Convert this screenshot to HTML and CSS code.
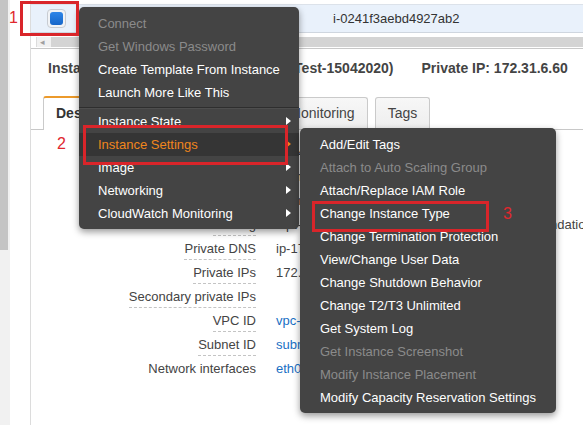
FILE: index.html
```html
<!DOCTYPE html>
<html lang="en">
<head>
<meta charset="utf-8">
<title>EC2 Instance Actions</title>
<link rel="stylesheet" href="styles.css">
</head>
<body>
<div class="app">
  <div class="scrolltrack"><div class="thumb"></div></div>
  <div class="gutter"></div>
  <main class="panel">
    <div class="grid-row">
      <div class="cell-check"><span class="checkbox"><span class="checkbox-fill"></span></span></div>
      <div class="cell-name">Test-15042020</div>
      <div class="cell-id">i-0241f3aebd4927ab2</div>
    </div>
    <div class="hscroll"><span class="hscroll-btn">&#9666;</span><span class="hscroll-track"></span></div>
    <div class="divider"></div>
    <section class="details">
      <h2 class="details-title">
        <span class="t-label">Instance:</span>
        <span class="t-id">i-0241f3aebd4927ab2 (Test-15042020)</span>
        <span class="t-ip">Private IP: 172.31.6.60</span>
      </h2>
      <div class="tabs">
        <div class="tab active">Description</div>
        <div class="tab">Status Checks</div>
        <div class="tab">Monitoring</div>
        <div class="tab">Tags</div>
      </div>
      <div class="props">
        <div class="prop"><div class="k"><span>Instance ID</span></div><div class="v">i-0241f3aebd4927ab2</div></div>
        <div class="prop"><div class="k"><span>Instance state</span></div><div class="v">running</div></div>
        <div class="prop"><div class="k"><span>Instance type</span></div><div class="v">t2.micro</div></div>
        <div class="prop"><div class="k"><span>Finding</span></div><div class="v">Opt-in to AWS Compute Optimizer for recommendations. | Learn more</div></div>
        <div class="prop"><div class="k"><span>Private DNS</span></div><div class="v">ip-172-31-6-60.ap-south-1.compute.internal</div></div>
        <div class="prop"><div class="k"><span>Private IPs</span></div><div class="v">172.31.6.60</div></div>
        <div class="prop"><div class="k"><span>Secondary private IPs</span></div><div class="v"></div></div>
        <div class="prop"><div class="k"><span>VPC ID</span></div><div class="v link">vpc-5a8c3e31</div></div>
        <div class="prop"><div class="k"><span>Subnet ID</span></div><div class="v link">subnet-0b2e6c47</div></div>
        <div class="prop"><div class="k"><span class="plain">Network interfaces</span></div><div class="v link">eth0</div></div>
      </div>
    </section>
  </main>
</div>

<div class="menu menu-main">
  <div class="item disabled">Connect</div>
  <div class="item disabled">Get Windows Password</div>
  <div class="item">Create Template From Instance</div>
  <div class="item">Launch More Like This</div>
  <div class="sep"></div>
  <div class="item sub">Instance State</div>
  <div class="item sub hover">Instance Settings</div>
  <div class="item sub">Image</div>
  <div class="item sub">Networking</div>
  <div class="item sub">CloudWatch Monitoring</div>
</div>

<div class="menu menu-sub">
  <div class="item">Add/Edit Tags</div>
  <div class="item disabled">Attach to Auto Scaling Group</div>
  <div class="item">Attach/Replace IAM Role</div>
  <div class="item">Change Instance Type</div>
  <div class="item">Change Termination Protection</div>
  <div class="item">View/Change User Data</div>
  <div class="item">Change Shutdown Behavior</div>
  <div class="item">Change T2/T3 Unlimited</div>
  <div class="item">Get System Log</div>
  <div class="item disabled">Get Instance Screenshot</div>
  <div class="item disabled">Modify Instance Placement</div>
  <div class="item">Modify Capacity Reservation Settings</div>
</div>

<div class="callout box1"></div>
<div class="callout box2"></div>
<div class="callout box3"></div>
<span class="step step1">1</span>
<span class="step step2">2</span>
<span class="step step3">3</span>
</body>
</html>
```
FILE: styles.css
```css
* { box-sizing: border-box; }
html, body {
  margin: 0;
  padding: 0;
  background: #fff;
  width: 583px;
  height: 433px;
  overflow: hidden;
}
body {
  font-family: "Liberation Sans", Arial, sans-serif;
  font-size: 13px;
  color: #444;
  position: relative;
}
.app {
  display: flex;
  height: 425px;
}
.scrolltrack {
  width: 10px;
  background: #f1f1f1;
  flex: none;
}
.thumb {
  width: 8px;
  height: 250px;
  background: #c4c4c4;
}
.gutter {
  width: 21px;
  flex: none;
  border-right: 1px solid #dcdcdc;
}
.panel {
  flex: 1;
  min-width: 0;
  white-space: nowrap;
  overflow: hidden;
}
.grid-row {
  margin-top: 4px;
  height: 29px;
  border-top: 1px solid #dce2ea;
  border-bottom: 1px solid #cfd6df;
  background: #e9f1fb;
  display: flex;
  align-items: center;
  color: #333;
}
.cell-check {
  width: 47px;
  padding-left: 16px;
  display: flex;
  align-items: center;
}
.checkbox {
  width: 19px;
  height: 19px;
  border: 1px solid #c8ccd2;
  border-radius: 4px;
  background: #f1f3f6;
  display: flex;
  align-items: center;
  justify-content: center;
}
.checkbox-fill {
  width: 13px;
  height: 13px;
  border-radius: 3px;
  background: linear-gradient(#2f86e8, #1666c9);
}
.cell-name {
  width: 240px;
  padding-left: 20px;
}
.cell-id {
  padding-left: 15px;
}
.hscroll {
  margin: 4px 0 0 5px;
  height: 10px;
  display: flex;
}
.hscroll-btn {
  width: 15px;
  background: #f1f1f1;
  border-left: 1px solid #dcdcdc;
  color: #a0a0a0;
  font-size: 9px;
  line-height: 10px;
  padding-left: 3px;
}
.hscroll-track {
  flex: 1;
  background: #d4d4d4;
}
.divider {
  margin-top: 1px;
  border-top: 1px solid #c8c8c8;
}
.details-title {
  margin: 9px 0 0 0;
  padding-left: 17px;
  font-size: 14px;
  font-weight: bold;
  line-height: 20px;
  color: #444;
  display: flex;
}
.t-id { margin-left: 36px; }
.t-ip { margin-left: 28px; }
.tabs {
  margin-top: 19px;
  padding-left: 12px;
  display: flex;
  align-items: flex-end;
  border-bottom: 1px solid #c8c8c8;
  height: 33px;
}
.tab {
  height: 32px;
  padding: 0 12px;
  margin-right: 7px;
  border: 1px solid #cacaca;
  border-bottom: none;
  border-radius: 3px 3px 0 0;
  background: linear-gradient(#f7f7f7, #eeeeee);
  font-size: 14px;
  line-height: 30px;
  color: #444;
}
.tab.active {
  height: 34px;
  margin-bottom: -1px;
  background: #fff;
  border-top: 2px solid #ec9a2b;
  font-weight: bold;
  color: #333;
}
.props {
  padding-top: 15px;
}
.prop {
  display: flex;
  height: 24px;
  line-height: 16px;
}
.k {
  width: 225px;
  text-align: right;
  flex: none;
}
.k span {
  display: inline-block;
  padding-bottom: 2px;
  border-bottom: 1px dashed #c4c4c4;
}
.k span.plain { border-bottom-color: transparent; }
.v {
  margin-left: 20px;
  color: #444;
}
.v.link { color: #1a6fc4; }

/* context menus */
.menu {
  position: absolute;
  background: #444;
  border-radius: 5px;
  box-shadow: 0 3px 7px rgba(0, 0, 0, 0.4);
  color: #fff;
  white-space: nowrap;
}
.menu-main {
  left: 79px;
  top: 7px;
  width: 220px;
  padding: 5px 0 4px;
}
.menu-sub {
  left: 300px;
  top: 128px;
  width: 256px;
  padding: 5px 0 4px;
}
.item {
  position: relative;
  height: 23px;
  line-height: 23px;
  padding-left: 19px;
}
.menu-sub .item { padding-left: 20px; }
.item.disabled { color: #8b8b8b; }
.item.hover {
  background: #353535;
  color: #f0861d;
}
.item.sub::after {
  content: "";
  position: absolute;
  right: 8px;
  top: 7px;
  border-left: 5px solid #fff;
  border-top: 4.5px solid transparent;
  border-bottom: 4.5px solid transparent;
}
.item.sub.hover::after { border-left-color: #f0861d; }
.sep {
  height: 1px;
  margin: 2.5px 0;
  background: #2e2e2e;
  box-shadow: 0 1px 0 #4e4e4e;
}

/* annotations */
.callout {
  position: absolute;
  border: 3px solid #d9252a;
}
.box1 { left: 20px; top: 1px; width: 59px; height: 35px; }
.box2 { left: 83px; top: 125px; width: 205px; height: 40px; }
.box3 { left: 312px; top: 201px; width: 177px; height: 31px; }
.step {
  position: absolute;
  font-size: 16px;
  line-height: 16px;
  color: #e0282e;
}
.step1 { left: 9px; top: 10px; }
.step2 { left: 57px; top: 136px; }
.step3 { left: 503px; top: 206px; }
```
